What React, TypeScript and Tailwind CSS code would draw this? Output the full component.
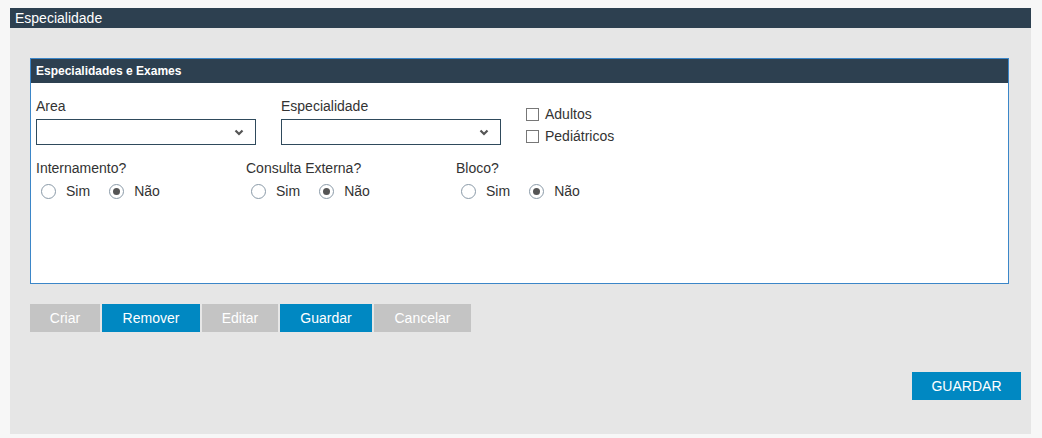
import React from "react";

const font = { fontFamily: '"Liberation Sans", Arial, sans-serif' };

function Select() {
  return (
    <div className="mt-[4px] flex h-[26px] w-[220px] items-center justify-end border border-[#2f4a5c] bg-white pr-[11px]">
      <svg width="10" height="7" viewBox="0 0 10 7">
        <path d="M1.5 1.5 L5 5 L8.5 1.5" fill="none" stroke="#555" strokeWidth="2.2" />
      </svg>
    </div>
  );
}

function Radio({ checked, label }: { checked?: boolean; label: string }) {
  return (
    <div className="flex items-center">
      <span className="flex h-[15px] w-[15px] items-center justify-center rounded-full border border-[#8a9aa8] bg-white">
        {checked && <span className="h-[7px] w-[7px] rounded-full bg-[#555]" />}
      </span>
      <span className="ml-[10px] text-[14px] text-[#333]">{label}</span>
    </div>
  );
}

function YesNo({ label }: { label: string }) {
  return (
    <div className="w-[210px]">
      <div className="h-[18px] text-[14px] leading-[18px] text-[#333]">{label}</div>
      <div className="mt-[4px] flex items-center gap-[19px] pl-[5px]">
        <Radio label="Sim" />
        <Radio label="Não" checked />
      </div>
    </div>
  );
}

function Check({ label }: { label: string }) {
  return (
    <div className="flex h-[22px] items-center">
      <span className="h-[13px] w-[13px] border border-[#777] bg-white" />
      <span className="ml-[6px] text-[14px] text-[#333]">{label}</span>
    </div>
  );
}

const tabBtn = "h-[28px] text-[14px] text-white";

export default function App() {
  return (
    <div className="min-h-screen bg-[#f7f7f7] pb-[4px] pl-[10px] pr-[11px] pt-[8px]" style={font}>
      <div className="h-[20px] bg-[#2d4050] pl-[5px] text-[14px] leading-[20px] text-white">Especialidade</div>
      <div className="h-[406px] bg-[#e6e6e6] pl-[20px] pr-[10px] pt-[30px]">
        <div className="mr-[12px] h-[226px] border border-[#3b86c8] bg-white">
          <div className="h-[24px] bg-[#2d4050] pl-[5px] text-[12px] font-bold leading-[24px] text-white">
            Especialidades e Exames
          </div>
          <div className="pl-[5px] pt-[14px]">
            <div className="flex">
              <div className="w-[220px]">
                <div className="h-[18px] text-[14px] leading-[18px] text-[#333]">Area</div>
                <Select />
              </div>
              <div className="ml-[25px] w-[220px]">
                <div className="h-[18px] text-[14px] leading-[18px] text-[#333]">Especialidade</div>
                <Select />
              </div>
              <div className="ml-[25px] pt-[6px]">
                <Check label="Adultos" />
                <Check label="Pediátricos" />
              </div>
            </div>
            <div className="mt-[12px] flex">
              <YesNo label="Internamento?" />
              <YesNo label="Consulta Externa?" />
              <YesNo label="Bloco?" />
            </div>
          </div>
        </div>
        <div className="mt-[20px] flex gap-[2px]">
          <button className={`${tabBtn} w-[70px] bg-[#c4c4c4]`}>Criar</button>
          <button className={`${tabBtn} w-[98px] bg-[#0088c2]`}>Remover</button>
          <button className={`${tabBtn} w-[76px] bg-[#c4c4c4]`}>Editar</button>
          <button className={`${tabBtn} w-[92px] bg-[#0088c2]`}>Guardar</button>
          <button className={`${tabBtn} w-[97px] bg-[#c4c4c4]`}>Cancelar</button>
        </div>
        <div className="mt-[40px] flex justify-end">
          <button className="h-[28px] w-[109px] bg-[#0088c2] text-[14px] text-white">GUARDAR</button>
        </div>
      </div>
    </div>
  );
}
